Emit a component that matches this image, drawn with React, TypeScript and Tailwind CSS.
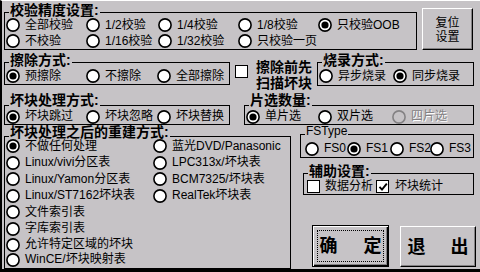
import React from 'react';

type RadioProps = {
  label: string;
  checked?: boolean;
  disabled?: boolean;
  className?: string;
};

function RadioDot({ checked = false, disabled = false }: { checked?: boolean; disabled?: boolean }) {
  return (
    <svg width="14" height="14" viewBox="0 0 14 14" className="shrink-0">
      <circle
        cx="7"
        cy="7"
        r="6.1"
        fill={disabled ? '#c6c3c6' : '#fff'}
        stroke={disabled ? '#848284' : '#000'}
        strokeWidth="1.6"
      />
      {checked && <circle cx="7" cy="7" r="3.6" fill="#000" />}
    </svg>
  );
}

function Radio({ label, checked, disabled, className = '' }: RadioProps) {
  return (
    <div className={`flex items-center ${className}`}>
      <RadioDot checked={checked} disabled={disabled} />
      <span
        className={`ml-[5px] whitespace-nowrap leading-[13px] ${
          disabled ? 'text-[#848284] [text-shadow:1px_1px_0_#fff]' : ''
        }`}
      >
        {label}
      </span>
    </div>
  );
}

function CheckBox({ checked = false }: { checked?: boolean }) {
  return (
    <span className="flex h-[13px] w-[13px] shrink-0 items-center justify-center border border-black bg-white">
      {checked && (
        <svg width="10" height="10" viewBox="0 0 10 10">
          <path d="M1.5 4.8 L4 7.6 L8.8 1.6" stroke="#000" strokeWidth="1.9" fill="none" />
        </svg>
      )}
    </span>
  );
}

// legendTop: vertical offset of the title over the frame line
function Group({
  title,
  plain = false,
  legendTop = '-top-[9px]',
  className = '',
  children,
}: {
  title: string;
  plain?: boolean;
  legendTop?: string;
  className?: string;
  children: React.ReactNode;
}) {
  return (
    <div className={`relative border border-black ${className}`}>
      <span
        className={`absolute left-[4px] whitespace-nowrap bg-[#c6c3c6] px-[1px] leading-[13px] ${legendTop} ${
          plain ? 'text-[12px]' : 'text-[14px] font-bold'
        }`}
      >
        {title}
      </span>
      {children}
    </div>
  );
}

export default function App() {
  return (
    <div className="flex h-[272px] w-[480px] flex-col overflow-hidden border-t border-b-[3px] border-l-2 border-t-white border-b-black border-l-black bg-[#c6c3c6] font-['Liberation_Sans','Noto_Sans_CJK_SC',sans-serif] text-[12px] leading-[16px] text-black">
      {/* 校验精度 + 复位 */}
      <div className="mt-[7px] flex items-start">
        <Group title="校验精度设置:" className="ml-[2px] mt-[4px] h-[38px] w-[413px] pl-[1px] pt-[4px]">
          <div className="relative flex h-[16px]">
            <Radio label="全部校验" className="w-[80px]" />
            <Radio label="1/2校验" className="w-[72px]" />
            <Radio label="1/4校验" className="w-[80px]" />
            <Radio label="1/8校验" className="w-[80px]" />
            <Radio label="只校验OOB" checked />
          </div>
          <div className="relative flex h-[16px]">
            <Radio label="不校验" className="w-[80px]" />
            <Radio label="1/16校验" className="w-[72px]" />
            <Radio label="1/32校验" className="w-[80px]" />
            <Radio label="只校验一页" />
          </div>
        </Group>
        <button className="ml-[5px] flex h-[42px] w-[51px] flex-col items-center justify-center border border-t-white border-l-white border-r-black border-b-black bg-[#c6c3c6] pt-[1px] leading-[14px] shadow-[inset_-1px_-1px_0_#848284]">
          <span>复位</span>
          <span>设置</span>
        </button>
      </div>

      {/* 擦除 / 扫描 / 烧录 */}
      <div className="mt-[10px] flex items-start">
        <Group title="擦除方式:" className="ml-[2px] mt-[2px] h-[23px] w-[226px] pl-[1px] pt-[5px]">
          <div className="relative flex h-[16px]">
            <Radio label="预擦除" checked className="w-[80px]" />
            <Radio label="不擦除" className="w-[71px]" />
            <Radio label="全部擦除" />
          </div>
        </Group>
        <div className="ml-[5px] flex items-start">
          <div className="mt-[5px]">
            <CheckBox />
          </div>
          <div className="ml-[8px] -mt-[1px] text-[14px] font-bold leading-[16px]">
            擦除前先
            <br />
            扫描坏块
          </div>
        </div>
        <Group title="烧录方式:" className="ml-[5px] mt-[2px] h-[24px] w-[157px] pl-[1px] pt-[5px]">
          <div className="relative flex h-[16px]">
            <Radio label="异步烧录" className="w-[74px]" />
            <Radio label="同步烧录" checked />
          </div>
        </Group>
      </div>

      {/* 坏块处理 / 片选 */}
      <div className="mt-[14px] flex items-start">
        <Group
          title="坏块处理方式:"
          legendTop="-top-[12px]"
          className="ml-[2px] h-[20px] w-[226px] pl-[1px] pt-[3px]"
        >
          <div className="relative flex h-[15px]">
            <Radio label="坏块跳过" checked className="w-[80px]" />
            <Radio label="坏块忽略" className="w-[71px]" />
            <Radio label="坏块替换" />
          </div>
        </Group>
        <Group
          title="片选数量:"
          legendTop="-top-[12px]"
          className="ml-[14px] h-[20px] w-[230px] pl-[1px] pt-[3px]"
        >
          <div className="relative flex h-[15px]">
            <Radio label="单片选" checked className="w-[72px]" />
            <Radio label="双片选" className="w-[74px]" />
            <Radio label="四片选" disabled />
          </div>
        </Group>
      </div>

      {/* 重建方式 + 右侧 */}
      <div className="mt-[9px] flex items-start">
        <Group
          title="坏块处理之后的重建方式:"
          legendTop="-top-[11px]"
          className="ml-[2px] mt-[2px] flex h-[133px] w-[287px] pl-[1px] pt-[1px]"
        >
          <div className="relative flex w-[147px] flex-col">
            <Radio label="不做任何处理" checked className="h-[16.5px]" />
            <Radio label="Linux/vivi分区表" className="h-[16.5px]" />
            <Radio label="Linux/Yamon分区表" className="h-[16.5px]" />
            <Radio label="Linux/ST7162坏块表" className="h-[16.5px]" />
            <Radio label="文件索引表" className="h-[16.5px]" />
            <Radio label="字库索引表" className="h-[16.5px]" />
            <Radio label="允许特定区域的坏块" className="h-[15px]" />
            <Radio label="WinCE/坏块映射表" className="h-[15px]" />
          </div>
          <div className="relative flex flex-col">
            <Radio label="蓝光DVD/Panasonic" className="h-[16.5px]" />
            <Radio label="LPC313x/坏块表" className="h-[16.5px]" />
            <Radio label="BCM7325/坏块表" className="h-[16.5px]" />
            <Radio label="RealTek坏块表" className="h-[16.5px]" />
          </div>
        </Group>

        <div className="ml-[9px] flex w-[174px] flex-col">
          <Group title="FSType" plain legendTop="-top-[10px]" className="h-[24px] pl-[4px] pt-[5px]">
            <div className="relative flex h-[17px]">
              <Radio label="FS0" className="w-[42px]" />
              <Radio label="FS1" checked className="w-[43px]" />
              <Radio label="FS2" className="w-[40px]" />
              <Radio label="FS3" />
            </div>
          </Group>

          <Group title="辅助设置:" className="ml-[3px] mt-[15px] h-[22px] w-[171px] pl-[3px] pt-[5px]">
            <div className="relative flex h-[15px] items-center">
              <div className="flex w-[69px] items-center">
                <CheckBox />
                <span className="ml-[5px] whitespace-nowrap leading-[13px]">数据分析</span>
              </div>
              <div className="flex items-center">
                <CheckBox checked />
                <span className="ml-[6px] whitespace-nowrap leading-[13px]">坏块统计</span>
              </div>
            </div>
          </Group>

          <div className="ml-[12px] mt-[30px] flex items-start">
            <button className="relative flex h-[42px] w-[77px] shrink-0 items-center justify-center gap-[26px] border border-black bg-[#c6c3c6] text-[18px] font-bold leading-[20px] shadow-[inset_1px_1px_0_#fff,inset_-1px_-1px_0_#000,inset_-2px_-2px_0_#848284]">
              <span className="pointer-events-none absolute inset-[4px] border border-dotted border-black" />
              <span>确</span>
              <span>定</span>
            </button>
            <button className="ml-[11px] mt-[1px] flex h-[41px] w-[76px] shrink-0 items-center justify-center gap-[25px] border border-t-white border-l-white border-r-black border-b-black bg-[#c6c3c6] text-[18px] font-bold leading-[20px] shadow-[inset_-1px_-1px_0_#848284]">
              <span>退</span>
              <span>出</span>
            </button>
          </div>
        </div>
      </div>
    </div>
  );
}
